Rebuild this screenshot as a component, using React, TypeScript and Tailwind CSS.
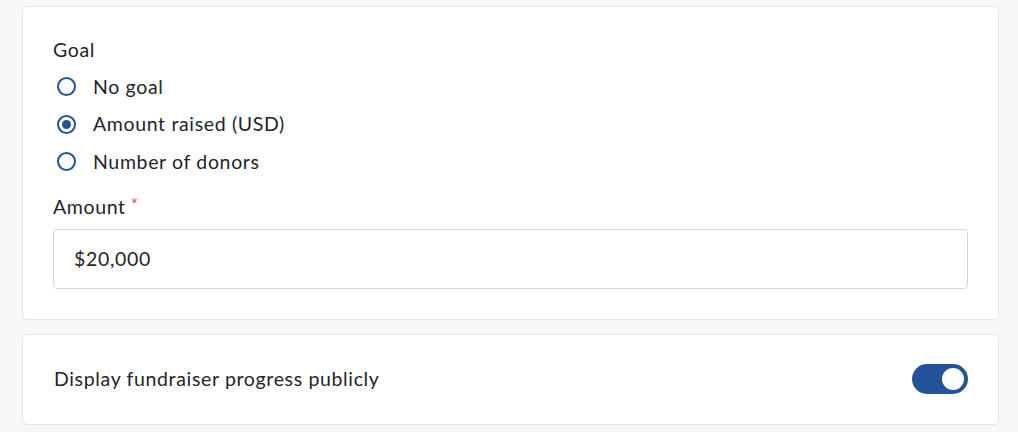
import { useState } from 'react';

type Goal = 'none' | 'amount' | 'donors';

const options: { value: Goal; label: string }[] = [
  { value: 'none', label: 'No goal' },
  { value: 'amount', label: 'Amount raised (USD)' },
  { value: 'donors', label: 'Number of donors' },
];

function Radio({ checked }: { checked: boolean }) {
  return (
    <span className="flex h-[19px] w-[19px] items-center justify-center rounded-full border-2 border-[#24528f] bg-white">
      {checked && <span className="h-[9px] w-[9px] rounded-full bg-[#24528f]" />}
    </span>
  );
}

export default function App() {
  const [goal, setGoal] = useState<Goal>('amount');
  const [amount, setAmount] = useState('$20,000');
  const [isPublic, setIsPublic] = useState(true);

  return (
    <div
      className="min-h-[432px] bg-[#f7f7f9] pl-[22px] pr-[19px] pt-[6px] text-[19.5px] leading-[24px] tracking-[0.65px] text-[#1f242b]"
      style={{ fontFamily: 'Lato, "Noto Sans", sans-serif' }}
    >
      {/* Goal card */}
      <section className="rounded-[5px] border border-[#e4e5e8] bg-white px-[30px] pb-[30px] pt-[31px]">
        <div>Goal</div>

        <div className="mt-[6px] flex flex-col">
          {options.map((o) => (
            <label
              key={o.value}
              onClick={() => setGoal(o.value)}
              className="flex h-[37.5px] cursor-pointer items-center gap-[17px] pl-[4px]"
            >
              <Radio checked={goal === o.value} />
              <span>{o.label}</span>
            </label>
          ))}
        </div>

        <div className="mt-[14px] flex items-start">
          Amount
          <span className="ml-[5px] mt-[1px] text-[17px] leading-[17px] text-[#e8445a]">*</span>
        </div>

        <input
          value={amount}
          onChange={(e) => setAmount(e.target.value)}
          className="mt-[10px] h-[60px] w-full rounded-[4px] border border-[#d5d5d7] px-[20px] tracking-[0.65px] text-[#1f242b] outline-none"
        />
      </section>

      {/* Public progress card */}
      <section className="mt-[14px] flex h-[91px] items-center justify-between rounded-[5px] border border-[#e4e5e8] bg-white pl-[31px] pr-[30px]">
        <span>Display fundraiser progress publicly</span>
        <button
          onClick={() => setIsPublic(!isPublic)}
          className={`flex h-[30px] w-[56px] items-center rounded-full px-[4px] ${
            isPublic ? 'justify-end bg-[#23549a]' : 'justify-start bg-[#c8cbd0]'
          }`}
        >
          <span className="h-[22px] w-[22px] rounded-full bg-white" />
        </button>
      </section>
    </div>
  );
}
